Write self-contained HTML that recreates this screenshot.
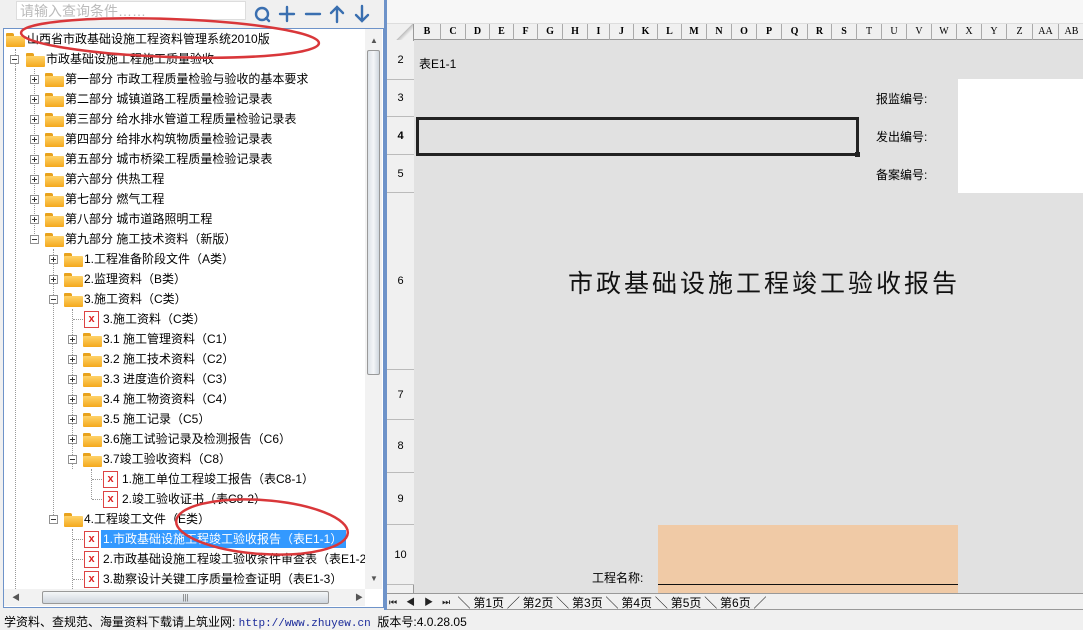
<!DOCTYPE html>
<html><head><meta charset="utf-8"><style>
*{margin:0;padding:0;box-sizing:border-box}
body{width:1083px;height:629px;overflow:hidden;background:#f0f0f0;font-family:"Liberation Sans","Noto Sans CJK SC","WenQuanYi Zen Hei",sans-serif;font-size:12px;color:#000;position:relative}
.a{position:absolute}
.r{position:absolute;height:20px;line-height:20px;white-space:nowrap;font-size:12px}
.ex{position:absolute;width:9px;height:9px;border:1px solid #919191;background:#fff;top:6px}
.ex:before{content:"";position:absolute;left:1px;top:3px;width:5px;height:1px;background:#333}
.ex.p:after{content:"";position:absolute;left:3px;top:1px;width:1px;height:5px;background:#333}
.fo{position:absolute;top:4px;width:19px;height:14px}
.fo:before{content:"";position:absolute;left:0;top:0;width:8px;height:4px;background:#e8a21c;border-radius:1px 2px 0 0}
.fo:after{content:"";position:absolute;left:0;top:3px;width:19px;height:11px;background:linear-gradient(#ffd36a,#f4a81c);border-radius:1px}
.fi{position:absolute;top:2px;width:15px;height:17px;background:#fff;border:1px solid #d44;color:#d22;font:bold 11px/15px "Liberation Sans",sans-serif;text-align:center}
.t{position:absolute;top:0}
.dl{position:absolute;border-top:1px dotted #999;height:0;top:10px}
.col{position:absolute;top:24px;height:16px;border-right:1px solid #aaa;font:bold 10px/16px "Liberation Serif",serif;text-align:center}
.rn{position:absolute;left:387px;width:27px;border-bottom:1px solid #bbb;text-align:center;font-size:11px;background:#f0f0f0}
.lb{position:absolute;font-size:12px}
</style></head><body>
<div class="a" style="left:16px;top:1px;width:230px;height:19px;background:#fff;border:1px solid #ddd;color:#bbb;font-size:14px;line-height:18px;padding-left:3px">请输入查询条件……</div>
<svg class="a" style="left:252px;top:4px" width="125" height="20" viewBox="0 0 125 20">
<g stroke="#3a6fb0" stroke-width="2.4" fill="none" stroke-linecap="round">
<circle cx="10" cy="10" r="6"/><path d="M14 14l3 3"/>
<path d="M28 10h14M35 3v14"/>
<path d="M54 10h14"/>
<path d="M85 18V3M79 9l6-6 6 6"/>
<path d="M110 2v15M104 11l6 6 6-6"/>
</g></svg>
<div class="a" style="left:3px;top:28px;width:381px;height:580px;background:#fff;border:1px solid #6e93c9"></div>
<div class="a" style="left:384px;top:0;width:3px;height:610px;background:#6e93c9"></div>
<div class="a" style="left:365px;top:29px;width:17px;height:560px;background:#f2f2f2"></div>
<div class="a" style="left:367px;top:50px;width:13px;height:325px;background:linear-gradient(90deg,#dde2e8,#f4f6f8,#cfd6de);border:1px solid #999;border-radius:2px"></div>
<div class="a" style="left:370px;top:36px;font-size:8px;color:#555">▲</div>
<div class="a" style="left:370px;top:574px;font-size:8px;color:#555">▼</div>
<div class="a" style="left:4px;top:589px;width:361px;height:17px;background:#f2f2f2"></div>
<div class="a" style="left:42px;top:591px;width:287px;height:13px;background:linear-gradient(#f4f6f8,#cfd6de);border:1px solid #999;border-radius:2px;text-align:center;font-size:8px;line-height:11px;color:#666">|||</div>
<div class="a" style="left:12px;top:592px;font-size:8px;color:#555">◀</div>
<div class="a" style="left:355px;top:592px;font-size:8px;color:#555">▶</div>

<div class="a" style="left:15px;top:49px;height:20px;border-left:1px dotted #999"></div>
<div class="a" style="left:15px;top:69px;height:520px;border-left:1px dotted #999"></div>
<div class="a" style="left:34px;top:69px;height:175px;border-left:1px dotted #999"></div>
<div class="a" style="left:53px;top:249px;height:270px;border-left:1px dotted #999"></div>
<div class="a" style="left:72px;top:309px;height:160px;border-left:1px dotted #999"></div>
<div class="a" style="left:72px;top:529px;height:60px;border-left:1px dotted #999"></div>
<div class="a" style="left:91px;top:469px;height:30px;border-left:1px dotted #999"></div>

<div class="r" style="top:29px"><div class="fo" style="left:6px"></div><span class="t" style="left:27px">山西省市政基础设施工程资料管理系统2010版</span></div>
<div class="r" style="top:49px"><div class="ex" style="left:10px"></div><div class="fo" style="left:26px"></div><span class="t" style="left:46px">市政基础设施工程施工质量验收</span></div>
<div class="r" style="top:69px"><div class="ex p" style="left:30px"></div><div class="fo" style="left:45px"></div><span class="t" style="left:65px">第一部分 市政工程质量检验与验收的基本要求</span></div>
<div class="r" style="top:89px"><div class="ex p" style="left:30px"></div><div class="fo" style="left:45px"></div><span class="t" style="left:65px">第二部分 城镇道路工程质量检验记录表</span></div>
<div class="r" style="top:109px"><div class="ex p" style="left:30px"></div><div class="fo" style="left:45px"></div><span class="t" style="left:65px">第三部分 给水排水管道工程质量检验记录表</span></div>
<div class="r" style="top:129px"><div class="ex p" style="left:30px"></div><div class="fo" style="left:45px"></div><span class="t" style="left:65px">第四部分 给排水构筑物质量检验记录表</span></div>
<div class="r" style="top:149px"><div class="ex p" style="left:30px"></div><div class="fo" style="left:45px"></div><span class="t" style="left:65px">第五部分 城市桥梁工程质量检验记录表</span></div>
<div class="r" style="top:169px"><div class="ex p" style="left:30px"></div><div class="fo" style="left:45px"></div><span class="t" style="left:65px">第六部分 供热工程</span></div>
<div class="r" style="top:189px"><div class="ex p" style="left:30px"></div><div class="fo" style="left:45px"></div><span class="t" style="left:65px">第七部分 燃气工程</span></div>
<div class="r" style="top:209px"><div class="ex p" style="left:30px"></div><div class="fo" style="left:45px"></div><span class="t" style="left:65px">第八部分 城市道路照明工程</span></div>
<div class="r" style="top:229px"><div class="ex" style="left:30px"></div><div class="fo" style="left:45px"></div><span class="t" style="left:65px">第九部分 施工技术资料（新版）</span></div>
<div class="r" style="top:249px"><div class="ex p" style="left:49px"></div><div class="fo" style="left:64px"></div><span class="t" style="left:84px">1.工程准备阶段文件（A类）</span></div>
<div class="r" style="top:269px"><div class="ex p" style="left:49px"></div><div class="fo" style="left:64px"></div><span class="t" style="left:84px">2.监理资料（B类）</span></div>
<div class="r" style="top:289px"><div class="ex" style="left:49px"></div><div class="fo" style="left:64px"></div><span class="t" style="left:84px">3.施工资料（C类）</span></div>
<div class="r" style="top:309px"><div class="dl" style="left:73px;width:10px"></div><div class="fi" style="left:84px">x</div><span class="t" style="left:103px">3.施工资料（C类）</span></div>
<div class="r" style="top:329px"><div class="ex p" style="left:68px"></div><div class="fo" style="left:83px"></div><span class="t" style="left:103px">3.1 施工管理资料（C1）</span></div>
<div class="r" style="top:349px"><div class="ex p" style="left:68px"></div><div class="fo" style="left:83px"></div><span class="t" style="left:103px">3.2 施工技术资料（C2）</span></div>
<div class="r" style="top:369px"><div class="ex p" style="left:68px"></div><div class="fo" style="left:83px"></div><span class="t" style="left:103px">3.3 进度造价资料（C3）</span></div>
<div class="r" style="top:389px"><div class="ex p" style="left:68px"></div><div class="fo" style="left:83px"></div><span class="t" style="left:103px">3.4 施工物资资料（C4）</span></div>
<div class="r" style="top:409px"><div class="ex p" style="left:68px"></div><div class="fo" style="left:83px"></div><span class="t" style="left:103px">3.5 施工记录（C5）</span></div>
<div class="r" style="top:429px"><div class="ex p" style="left:68px"></div><div class="fo" style="left:83px"></div><span class="t" style="left:103px">3.6施工试验记录及检测报告（C6）</span></div>
<div class="r" style="top:449px"><div class="ex" style="left:68px"></div><div class="fo" style="left:83px"></div><span class="t" style="left:103px">3.7竣工验收资料（C8）</span></div>
<div class="r" style="top:469px"><div class="dl" style="left:92px;width:10px"></div><div class="fi" style="left:103px">x</div><span class="t" style="left:122px">1.施工单位工程竣工报告（表C8-1）</span></div>
<div class="r" style="top:489px"><div class="dl" style="left:92px;width:10px"></div><div class="fi" style="left:103px">x</div><span class="t" style="left:122px">2.竣工验收证书（表C8-2）</span></div>
<div class="r" style="top:509px"><div class="ex" style="left:49px"></div><div class="fo" style="left:64px"></div><span class="t" style="left:84px">4.工程竣工文件（E类）</span></div>
<div class="r" style="top:529px"><div class="dl" style="left:73px;width:10px"></div><div class="fi" style="left:84px">x</div><span class="t" style="left:101px;top:1px;height:18px;line-height:18px;background:#3399ff;color:#fff;width:245px;padding-left:2px">1.市政基础设施工程竣工验收报告（表E1-1）</span></div>
<div class="r" style="top:549px"><div class="dl" style="left:73px;width:10px"></div><div class="fi" style="left:84px">x</div><span class="t" style="left:103px;width:262px;overflow:hidden">2.市政基础设施工程竣工验收条件审查表（表E1-2</span></div>
<div class="r" style="top:569px"><div class="dl" style="left:73px;width:10px"></div><div class="fi" style="left:84px">x</div><span class="t" style="left:103px">3.勘察设计关键工序质量检查证明（表E1-3）</span></div>

<div class="a" style="left:387px;top:0;width:696px;height:24px;background:#f7f7f7;border-bottom:1px solid #ddd"></div>
<div class="a" style="left:387px;top:24px;width:696px;height:569px;background:#e1e1e1"></div>
<div class="a" style="left:387px;top:24px;width:696px;height:16px;background:#f0f0f0;border-bottom:1px solid #999"></div>
<div class="a" style="left:387px;top:24px;width:27px;height:16px;border-right:1px solid #999;background:linear-gradient(135deg,#f0f0f0 60%,#bbb 60%,#f0f0f0 75%)"></div>
<div class="col" style="left:414px;width:27px">B</div>
<div class="col" style="left:441px;width:25px">C</div>
<div class="col" style="left:466px;width:24px">D</div>
<div class="col" style="left:490px;width:24px">E</div>
<div class="col" style="left:514px;width:24px">F</div>
<div class="col" style="left:538px;width:25px">G</div>
<div class="col" style="left:563px;width:25px">H</div>
<div class="col" style="left:588px;width:22px">I</div>
<div class="col" style="left:610px;width:24px">J</div>
<div class="col" style="left:634px;width:24px">K</div>
<div class="col" style="left:658px;width:24px">L</div>
<div class="col" style="left:682px;width:25px">M</div>
<div class="col" style="left:707px;width:25px">N</div>
<div class="col" style="left:732px;width:25px">O</div>
<div class="col" style="left:757px;width:25px">P</div>
<div class="col" style="left:782px;width:26px">Q</div>
<div class="col" style="left:808px;width:24px">R</div>
<div class="col" style="left:832px;width:25px">S</div>
<div class="col" style="left:857px;width:25px;font-weight:normal">T</div>
<div class="col" style="left:882px;width:25px;font-weight:normal">U</div>
<div class="col" style="left:907px;width:25px;font-weight:normal">V</div>
<div class="col" style="left:932px;width:25px;font-weight:normal">W</div>
<div class="col" style="left:957px;width:25px;font-weight:normal">X</div>
<div class="col" style="left:982px;width:25px;font-weight:normal">Y</div>
<div class="col" style="left:1007px;width:26px;font-weight:normal">Z</div>
<div class="col" style="left:1033px;width:26px;font-weight:normal">AA</div>
<div class="col" style="left:1059px;width:26px;font-weight:normal">AB</div>
<div class="a" style="left:387px;top:40px;width:27px;height:553px;background:#f0f0f0;border-right:1px solid #999"></div>
<div class="rn" style="top:41px;height:39px;line-height:39px">2</div>
<div class="rn" style="top:80px;height:37px;line-height:37px">3</div>
<div class="rn" style="top:117px;height:38px;line-height:38px;font-weight:bold">4</div>
<div class="rn" style="top:155px;height:38px;line-height:38px">5</div>
<div class="rn" style="top:193px;height:177px;line-height:177px">6</div>
<div class="rn" style="top:370px;height:50px;line-height:50px">7</div>
<div class="rn" style="top:420px;height:53px;line-height:53px">8</div>
<div class="rn" style="top:473px;height:52px;line-height:52px">9</div>
<div class="rn" style="top:525px;height:60px;line-height:60px">10</div>
<div class="lb" style="left:419px;top:55px">表E1-1</div>
<div class="a" style="left:958px;top:79px;width:125px;height:114px;background:#fff"></div>
<div class="lb" style="left:876px;top:90px">报监编号:</div>
<div class="lb" style="left:876px;top:128px">发出编号:</div>
<div class="lb" style="left:876px;top:166px">备案编号:</div>
<div class="a" style="left:416px;top:117px;width:443px;height:39px;border:3px solid #222"></div>
<div class="a" style="left:855px;top:152px;width:5px;height:5px;background:#222"></div>
<div class="a" style="left:568px;top:264px;font-size:25px;letter-spacing:3px;color:#111;white-space:nowrap">市政基础设施工程竣工验收报告</div>
<div class="a" style="left:658px;top:525px;width:300px;height:68px;background:#f0caa6"></div>
<div class="a" style="left:658px;top:584px;width:300px;height:1px;background:#111"></div>
<div class="lb" style="left:592px;top:569px">工程名称:</div>
<div class="a" style="left:387px;top:593px;width:696px;height:17px;background:#f0f0f0;border-top:1px solid #999;border-bottom:1px solid #999"></div>
<div class="a" style="left:389px;top:595px;font-size:9px;letter-spacing:9px;color:#222">⏮◀▶⏭</div>
<div class="a" style="left:458px;top:594px;font-size:12px;white-space:nowrap">╲ 第1页 ╱ 第2页 ╲ 第3页 ╲ 第4页 ╲ 第5页 ╲ 第6页 ╱</div>
<div class="a" style="left:4px;top:613px;font-size:12px;white-space:nowrap">学资料、查规范、海量资料下载请上筑业网: <span style="color:#1a2a9a;font-family:'Liberation Mono',monospace;font-size:11px">http://www.zhuyew.cn</span>&nbsp; 版本号:4.0.28.05</div>
<svg class="a" style="left:0;top:0" width="1083" height="629">
<ellipse cx="170" cy="38" rx="149" ry="19" fill="none" stroke="#d9373a" stroke-width="2.5" transform="rotate(2 170 38)"/>
<ellipse cx="262" cy="527" rx="86" ry="27" fill="none" stroke="#d9373a" stroke-width="2.5" transform="rotate(4 262 527)"/>
</svg>
</body></html>
